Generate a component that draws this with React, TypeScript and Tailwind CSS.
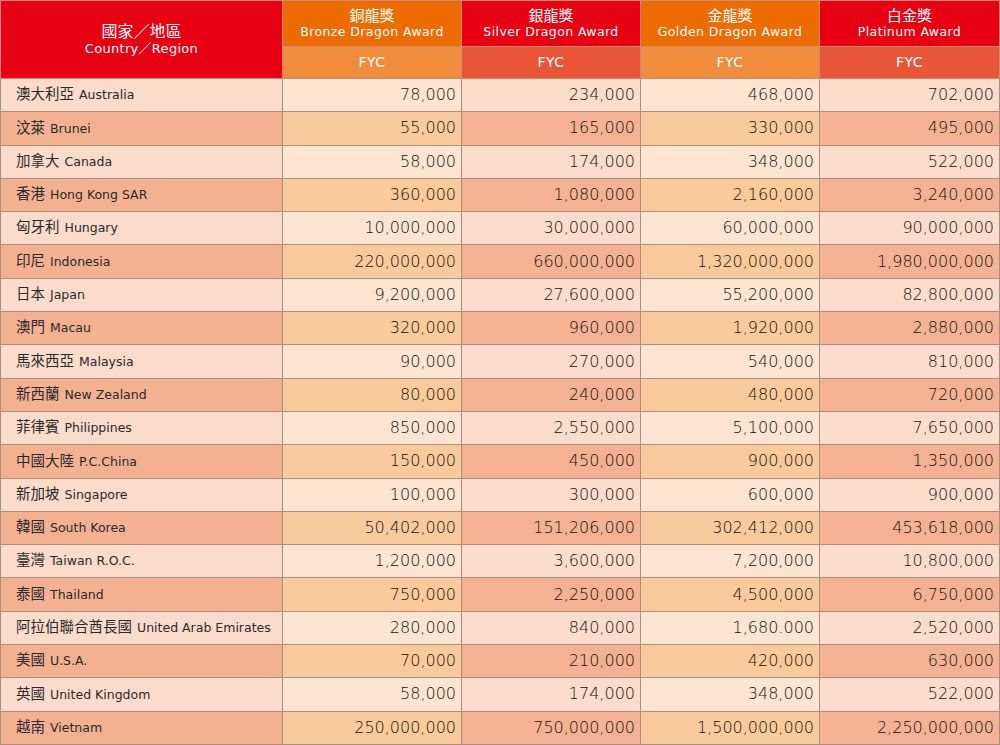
const rows: [string, string, string[]][] = [
  ["澳大利亞", "Australia", ["78,000", "234,000", "468,000", "702,000"]],
  ["汶萊", "Brunei", ["55,000", "165,000", "330,000", "495,000"]],
  ["加拿大", "Canada", ["58,000", "174,000", "348,000", "522,000"]],
  ["香港", "Hong Kong SAR", ["360,000", "1,080,000", "2,160,000", "3,240,000"]],
  ["匈牙利", "Hungary", ["10,000,000", "30,000,000", "60,000,000", "90,000,000"]],
  ["印尼", "Indonesia", ["220,000,000", "660,000,000", "1,320,000,000", "1,980,000,000"]],
  ["日本", "Japan", ["9,200,000", "27,600,000", "55,200,000", "82,800,000"]],
  ["澳門", "Macau", ["320,000", "960,000", "1,920,000", "2,880,000"]],
  ["馬來西亞", "Malaysia", ["90,000", "270,000", "540,000", "810,000"]],
  ["新西蘭", "New Zealand", ["80,000", "240,000", "480,000", "720,000"]],
  ["菲律賓", "Philippines", ["850,000", "2,550,000", "5,100,000", "7,650,000"]],
  ["中國大陸", "P.C.China", ["150,000", "450,000", "900,000", "1,350,000"]],
  ["新加坡", "Singapore", ["100,000", "300,000", "600,000", "900,000"]],
  ["韓國", "South Korea", ["50,402,000", "151,206,000", "302,412,000", "453,618,000"]],
  ["臺灣", "Taiwan R.O.C.", ["1,200,000", "3,600,000", "7,200,000", "10,800,000"]],
  ["泰國", "Thailand", ["750,000", "2,250,000", "4,500,000", "6,750,000"]],
  ["阿拉伯聯合酋長國", "United Arab Emirates", ["280,000", "840,000", "1,680.000", "2,520,000"]],
  ["美國", "U.S.A.", ["70,000", "210,000", "420,000", "630,000"]],
  ["英國", "United Kingdom", ["58,000", "174,000", "348,000", "522,000"]],
  ["越南", "Vietnam", ["250,000,000", "750,000,000", "1,500,000,000", "2,250,000,000"]],
];

const awards = [
  { zh: "銅龍獎", en: "Bronze Dragon Award", orange: true },
  { zh: "銀龍獎", en: "Silver Dragon Award", orange: false },
  { zh: "金龍獎", en: "Golden Dragon Award", orange: true },
  { zh: "白金獎", en: "Platinum Award", orange: false },
];

const font = "font-['DejaVu_Sans','Noto_Sans_CJK_TC',sans-serif]";

export default function App() {
  return (
    <div className={`w-[1000px] h-[745px] bg-white ${font}`}>
      <table className="w-[999px] border-collapse table-fixed">
        <colgroup>
          <col className="w-[282px]" />
          <col className="w-[179px]" />
          <col className="w-[179px]" />
          <col className="w-[179px]" />
          <col className="w-[180px]" />
        </colgroup>
        <thead>
          <tr className="h-[46px]">
            <th
              rowSpan={2}
              className="bg-[#e60012] text-white font-normal border border-[#c98a78] leading-[17px]"
            >
              <div className="text-[16px]">國家／地區</div>
              <div className="text-[13px] tracking-[0.3px]">Country／Region</div>
            </th>
            {awards.map((a) => (
              <th
                key={a.en}
                className={`${a.orange ? "bg-[#ec6c00]" : "bg-[#e60012]"} text-white font-normal border border-[#c98a78] leading-[16px] pt-[1px]`}
              >
                <div className="text-[15px]">{a.zh}</div>
                <div className="text-[12.5px] tracking-[0.4px]">{a.en}</div>
              </th>
            ))}
          </tr>
          <tr className="h-[32px]">
            {awards.map((a) => (
              <th
                key={a.en}
                className={`${a.orange ? "bg-[#f08d3d]" : "bg-[#e95537]"} text-white font-normal text-[14px] tracking-[0.5px] border border-[#c98a78]`}
              >
                FYC
              </th>
            ))}
          </tr>
        </thead>
        <tbody className="text-[#2a2a2a]">
          {rows.map(([zh, en, vals], i) => {
            const light = i % 2 === 0;
            return (
              <tr key={en} className="h-[33.3px]">
                <td
                  className={`${light ? "bg-[#fbdccb]" : "bg-[#f4b192]"} border border-[#a89080] pl-[15px] text-[12.5px] whitespace-nowrap`}
                >
                  <span className="text-[14.5px] mr-[5px]">{zh}</span>
                  {en}
                </td>
                {vals.map((v, j) => {
                  const orange = j % 2 === 0;
                  const bg = orange
                    ? light
                      ? "bg-[#fde5d1]"
                      : "bg-[#f9ca9b]"
                    : light
                      ? "bg-[#fcdccb]"
                      : "bg-[#f5b193]";
                  return (
                    <td
                      key={j}
                      className={`${bg} border border-[#a89080] text-right pr-[5px] text-[16px] font-extralight text-[#111]`}
                    >
                      {v}
                    </td>
                  );
                })}
              </tr>
            );
          })}
        </tbody>
      </table>
    </div>
  );
}
